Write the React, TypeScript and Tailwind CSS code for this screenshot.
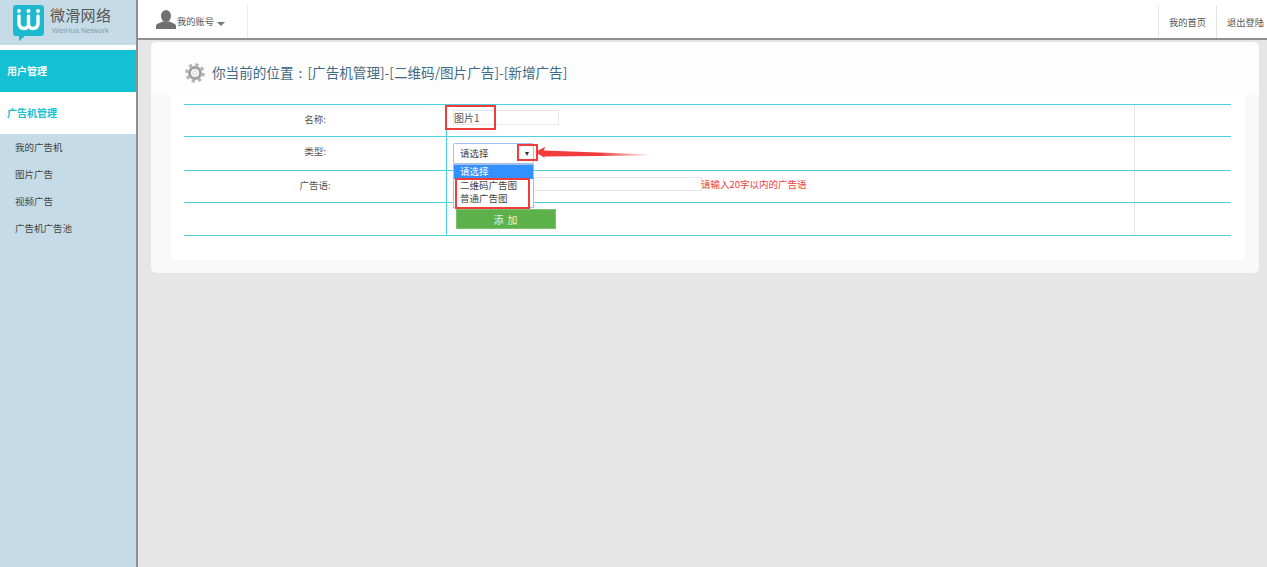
const font = "font-['Noto_Sans_CJK_SC','Liberation_Sans',sans-serif]";

function Logo() {
  return (
    <svg width="33" height="36" viewBox="0 0 33 36" className="shrink-0">
      <path d="M3 0h25a3 3 0 0 1 3 3v25a3 3 0 0 1-3 3H12l-6 5v-5H3a3 3 0 0 1-3-3V3a3 3 0 0 1 3-3z" fill="#1cb9cf" />
      <g stroke="#fff" strokeWidth="3.4" fill="none" strokeLinecap="round">
        <path d="M6 11v8a5 5 0 0 0 9.500 1.500A5 5 0 0 0 25 19v-8" />
        <path d="M15.500 11v9" />
      </g>
      <g fill="#fff">
        <circle cx="6" cy="6" r="2" />
        <circle cx="15.500" cy="6" r="2" />
        <circle cx="25" cy="6" r="2" />
      </g>
    </svg>
  );
}

function UserIcon() {
  return (
    <svg width="20" height="19" viewBox="0 0 20 19" className="shrink-0">
      <ellipse cx="10" cy="6" rx="5" ry="6" fill="#707070" />
      <path d="M0 19v-3c0-2.500 4-3 6.500-4.500h7C16 13 20 13.500 20 16v3z" fill="#707070" />
    </svg>
  );
}

function GearIcon() {
  return (
    <svg width="20" height="20" viewBox="0 0 20 20" className="shrink-0">
      <circle cx="10" cy="10" r="8.300" fill="none" stroke="#b4b4b4" strokeWidth="3" strokeDasharray="3.300 3.220" />
      <circle cx="10" cy="10" r="5.500" fill="none" stroke="#a2a2a2" strokeWidth="3" />
      <circle cx="10" cy="10" r="2.200" fill="none" stroke="#d0d0d0" strokeWidth="1" />
    </svg>
  );
}

function Sidebar() {
  const items = ["我的广告机", "图片广告", "视频广告", "广告机广告池"];
  return (
    <aside className="w-[138px] shrink-0 bg-[#c5dce8] border-r-2 border-[#8f8f8f] flex flex-col">
      <div className="h-[45px] flex items-start pl-[13px] pt-[5px] gap-[4px]">
        <Logo />
        <div className="flex flex-col">
          <span className="text-[15px] leading-[20px] tracking-[0.3px] text-[#555]">微滑网络</span>
          <span className="text-[7.6px] leading-[10px] mt-[1px] pl-[2px] text-[#8a9aa5] font-['Liberation_Sans',sans-serif]">WeiHua Network</span>
        </div>
      </div>
      <div className="h-[5px] bg-white" />
      <div className="h-[42px] bg-[#14c0d3] flex items-center pl-[7px] pb-[2px] text-[10px] font-bold text-white">用户管理</div>
      <div className="h-[42px] bg-white flex items-center pl-[7px] pb-[2px] text-[10px] font-bold text-[#14c0d3]">广告机管理</div>
      <ul>
        {items.map((item) => (
          <li key={item} className="h-[27px] flex items-center pl-[15px] text-[9.5px] text-[#444]">
            {item}
          </li>
        ))}
      </ul>
    </aside>
  );
}

function TopBar() {
  return (
    <header className="h-10 bg-white border-b-2 border-[#8f8f8f] flex justify-between text-[9.25px] text-[#555]">
      <div className="w-[110px] h-[33px] mt-[5px] pl-[18px] pt-[5px] flex items-start border-r border-[#eaeaea]">
        <UserIcon />
        <span className="ml-[1px] mt-[4px] leading-[14px]">我的账号</span>
        <span className="ml-[3px] mt-[12px] border-x-4 border-t-4 border-x-transparent border-t-[#777]" />
      </div>
      <div className="flex mt-[5px] h-[33px]">
        <span className="w-[58px] pl-[10px] pt-[2px] border-l border-[#e4e4e4] flex items-center">我的首页</span>
        <span className="w-[51px] pl-[10px] pt-[2px] border-l border-[#e4e4e4] flex items-center whitespace-nowrap">退出登陆</span>
      </div>
    </header>
  );
}

function Row({ label, height, labelClass, children }: { label?: string; height: string; labelClass: string; children?: React.ReactNode }) {
  return (
    <div className={`${height} flex border-b border-[#4ed0de]`}>
      <div className={`w-[262px] flex items-center justify-center text-[9.5px] text-[#555] ${labelClass}`}>{label}</div>
      <div className="w-[688px] border-l border-[#4ed0de] relative">{children}</div>
      <div className="flex-1 border-l border-[#e5e5e5]" />
    </div>
  );
}

function AddForm() {
  return (
    <div className="border-t border-[#4ed0de]">
      <Row label="名称:" height="h-[32px]" labelClass="pb-[2px]">
        <div className="absolute left-[6px] top-[5px] w-[106px] h-[15px] border border-[#e8e8e8] bg-white flex items-center text-[10px] text-[#555]">
          图片1
        </div>
        <div className="absolute left-[-2px] top-0 w-[51px] h-[25px] border-2 border-[#f03c3c]" />
      </Row>
      <Row label="类型:" height="h-[34px]" labelClass="pb-[4px]">
        <div className="absolute left-[6px] top-[6px] w-[81px] h-[21px] border border-[#a5bfe8] rounded-[2px] bg-white flex items-center pl-[6px] text-[9.5px] text-[#444]">
          请选择
          <span className="absolute right-[4px] top-[8px] border-x-[2.500px] border-t-[4px] border-x-transparent border-t-[#333]" />
        </div>
        {/* opened select list */}
        <div className="absolute z-10 left-[6px] top-[27px] w-[81px] h-[44px] border border-[#a5bfe8] bg-white text-[9.5px] text-[#444] leading-[13px]">
          <div className="bg-[#3390ff] text-white pl-[6px] h-[14px]">请选择</div>
          <div className="pl-[6px]">二维码广告图</div>
          <div className="pl-[6px]">普通广告图</div>
        </div>
        <div className="absolute z-20 left-[70px] top-[7px] w-[21px] h-[17px] border-2 border-[#f03c3c]" />
        <div className="absolute z-20 left-[8px] top-[41px] w-[75px] h-[31px] border-2 border-[#f03c3c]" />
        {/* annotation arrow */}
        <svg width="120" height="12" viewBox="0 0 120 12" className="absolute z-20 left-[88px] top-[10px]">
          <defs>
            <linearGradient id="arrowFade" x1="0" x2="1" y1="0" y2="0">
              <stop offset="0" stopColor="#f03c3c" />
              <stop offset="0.55" stopColor="#f03c3c" />
              <stop offset="1" stopColor="#f03c3c" stopOpacity="0" />
            </linearGradient>
          </defs>
          <path d="M0 5L10 0L9 3.500L118 7.500L118 8.500L9 9.500L10 11z" fill="url(#arrowFade)" />
        </svg>
      </Row>
      <Row label="广告语:" height="h-[32px]" labelClass="pb-[2px]">
        <div className="absolute left-[86px] top-[6px] w-[169px] h-[14px] border border-[#e8e8e8] bg-white" />
        <span className="absolute left-[254px] top-[6px] text-[9.5px] leading-[14px] text-[#f03c3c] whitespace-nowrap">
          请输入20字以内的广告语
        </span>
      </Row>
      <Row height="h-[33px]" labelClass="">
        <button className="absolute left-[9px] top-[6px] w-[100px] h-[20px] bg-[#5cb14a] border border-[#7fc070] text-[10px] tracking-[1px] text-[#e8f3e4] flex items-center justify-center">
          添 加
        </button>
      </Row>
    </div>
  );
}

export default function App() {
  return (
    <div className={`h-[567px] w-[1267px] flex overflow-hidden bg-[#e6e6e6] ${font}`}>
      <Sidebar />
      <div className="flex-1 flex flex-col min-w-0">
        <TopBar />
        <main className="pl-[13px] pr-2 pt-[2px]">
          <section className="h-[231px] rounded-[5px] bg-[#f8f8f8] flex flex-col overflow-hidden">
            <div className="h-[53px] bg-[#fdfdfd] flex items-center pt-[8px] pl-[34px] gap-[7px] text-[13.6px] text-[#3f6a85]">
              <GearIcon />
              <span className="whitespace-nowrap">
                你当前的位置<span className="mx-[2px]"> : </span>[广告机管理]-[二维码/图片广告]-[新增广告]
              </span>
            </div>
            <div className="h-[165px] ml-[20px] mr-[14px] bg-white pl-[13px] pr-[14px] pt-[9px]">
              <AddForm />
            </div>
          </section>
        </main>
      </div>
    </div>
  );
}
